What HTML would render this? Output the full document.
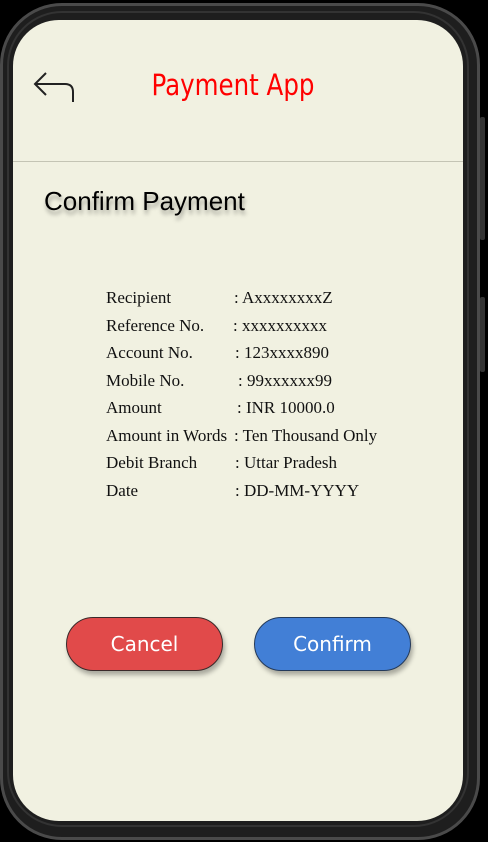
<!DOCTYPE html>
<html><head><style>
html,body{margin:0;padding:0;background:#000;width:488px;height:842px;overflow:hidden;position:relative}
.frame{position:absolute;left:0;top:3px;width:480px;height:837px;border-radius:62px;background:#1e1e1e;box-sizing:border-box;border:3px solid #4a4a4a}
.inner{position:absolute;left:7px;top:11px;width:462px;height:816px;border-radius:55px;border:2px solid #333;box-sizing:border-box}
.btnside{position:absolute;left:480px;width:5px;background:#333;border-radius:2px}
.screen{position:absolute;left:13px;top:20px;width:450px;height:801px;border-radius:46px;background:#f1f1e1;overflow:hidden}
.title{position:absolute;left:0;width:440px;top:48px;text-align:center;color:#f00;font-family:"DejaVu Sans Condensed","Liberation Sans Narrow","Liberation Sans",sans-serif;font-stretch:condensed;font-size:29px;transform:scaleX(.94)}
.hr{position:absolute;left:0;top:141px;width:450px;height:1px;background:#c4c4b4}
.h{position:absolute;left:31px;top:166px;font-family:"Liberation Sans",sans-serif;font-size:26px;color:#000;text-shadow:1px 4px 4px rgba(0,0,0,.35)}
.r{position:absolute;font-family:"Liberation Serif",serif;font-size:17px;color:#111;white-space:nowrap}
.b{position:absolute;top:597px;width:157px;height:54px;border-radius:27px;border:1px solid #3a2a2a;box-sizing:border-box;color:#fff;font-family:"DejaVu Sans",sans-serif;font-size:20px;text-align:center;line-height:53px;box-shadow:2px 4px 5px rgba(0,0,0,.3)}
</style></head><body>
<div class="frame"></div>
<div class="inner"></div>
<div class="btnside" style="top:117px;height:123px"></div>
<div class="btnside" style="top:297px;height:75px"></div>
<div class="screen">
<svg style="position:absolute;left:20px;top:50px" width="44" height="36" viewBox="0 0 44 36"><path d="M13 3 L2 14 L13 25 M2 14 H32 Q40 14 40 22 V32" fill="none" stroke="#222" stroke-width="2"/></svg>
<div class="title">Payment App</div>
<div class="hr"></div>
<div class="h">Confirm Payment</div>
<div class="r" style="left:93px;top:268px">Recipient</div><div class="r" style="left:221px;top:268px">: AxxxxxxxxZ</div>
<div class="r" style="left:93px;top:296px">Reference No.</div><div class="r" style="left:220px;top:296px">: xxxxxxxxxx</div>
<div class="r" style="left:93px;top:323px">Account No.</div><div class="r" style="left:222px;top:323px">: 123xxxx890</div>
<div class="r" style="left:93px;top:351px">Mobile No.</div><div class="r" style="left:225px;top:351px">: 99xxxxxx99</div>
<div class="r" style="left:93px;top:378px">Amount</div><div class="r" style="left:224px;top:378px">: INR 10000.0</div>
<div class="r" style="left:93px;top:406px">Amount in Words</div><div class="r" style="left:221px;top:406px">: Ten Thousand Only</div>
<div class="r" style="left:93px;top:433px">Debit Branch</div><div class="r" style="left:222px;top:433px">: Uttar Pradesh</div>
<div class="r" style="left:93px;top:461px">Date</div><div class="r" style="left:222px;top:461px">: DD-MM-YYYY</div>
<div class="b" style="left:53px;background:#e14a4a">Cancel</div>
<div class="b" style="left:241px;background:#427fd6;border-color:#243a5a">Confirm</div>
</div>
</body></html>
